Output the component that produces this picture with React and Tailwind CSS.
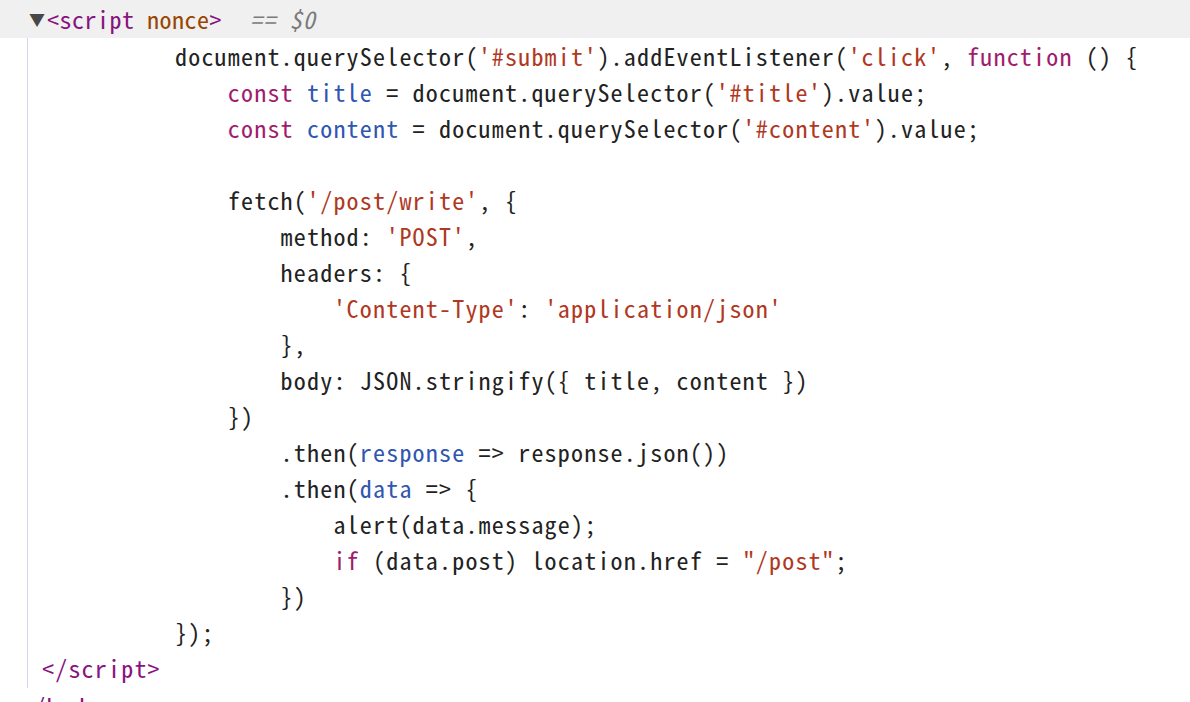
import React from "react";

const K = ({ children }) => <span className="text-[#9f1d6c]">{children}</span>;
const S = ({ children }) => <span className="text-[#b0381f]">{children}</span>;
const V = ({ children }) => <span className="text-[#2f56b0]">{children}</span>;

const lines = [
  <>document.querySelector(<S>'#submit'</S>).addEventListener(<S>'click'</S>, <K>function</K> () {"{"}</>,
  <>{"    "}<K>const</K> <V>title</V> = document.querySelector(<S>'#title'</S>).value;</>,
  <>{"    "}<K>const</K> <V>content</V> = document.querySelector(<S>'#content'</S>).value;</>,
  <>{" "}</>,
  <>{"    "}fetch(<S>'/post/write'</S>, {"{"}</>,
  <>{"        "}method: <S>'POST'</S>,</>,
  <>{"        "}headers: {"{"}</>,
  <>{"            "}<S>'Content-Type'</S>: <S>'application/json'</S></>,
  <>{"        "}{"},"}</>,
  <>{"        "}body: JSON.stringify({"{"} title, content {"}"})</>,
  <>{"    "}{"})"}</>,
  <>{"        "}.then(<V>response</V> =&gt; response.json())</>,
  <>{"        "}.then(<V>data</V> =&gt; {"{"}</>,
  <>{"            "}alert(data.message);</>,
  <>{"            "}<K>if</K> (data.post) location.href = <S>"/post"</S>;</>,
  <>{"        "}{"})"}</>,
  <>{"});"}</>,
];

export default function App() {
  return (
    <div
      className="w-[1190px] h-[702px] overflow-hidden bg-white text-[#222222] text-[24px] tracking-[1.2px]"
      style={{ fontFamily: '"Noto Sans Mono CJK KR", "Liberation Mono", monospace' }}
    >
      <div className="h-[38px] bg-[#f0f0f0] flex items-center whitespace-pre">
        <span className="ml-[29px] w-[18px] text-[16px] text-[#474747] tracking-normal">▼</span>
        <span className="tracking-[0.5px]">
          <span className="text-[#881280]">&lt;script </span>
          <span className="text-[#994500]">nonce</span>
          <span className="text-[#881280]">&gt;</span>
        </span>
        <span className="ml-[28px] text-[#7a7a7a] italic">== $0</span>
      </div>
      <div className="ml-[27px] border-l border-[#d0d7ea] pb-[2px]">
        {lines.map((l, i) => (
          <div key={i} className="h-[36px] leading-[36px] whitespace-pre pl-[147px]">
            {l}
          </div>
        ))}
        <div className="h-[36px] leading-[36px] whitespace-pre pl-[14px] text-[#881280]">&lt;/script&gt;</div>
      </div>
      <div className="h-[36px] leading-[36px] whitespace-pre pl-[20px] text-[#881280]">&lt;/body&gt;</div>
    </div>
  );
}
